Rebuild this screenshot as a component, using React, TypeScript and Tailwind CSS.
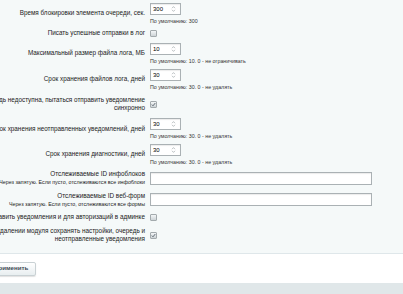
import React from "react";

const FONT = "font-['Liberation_Sans',Arial,sans-serif]";

function Row({
  h,
  label,
  children,
}: {
  h: string;
  label: React.ReactNode;
  children: React.ReactNode;
}) {
  return (
    <div className={`flex items-center ${h}`}>
      <div className="w-[145px] shrink-0 flex justify-end">
        <div className="whitespace-nowrap text-right text-[6.35px] leading-[8px] text-[#222]">
          {label}
        </div>
      </div>
      <div className="ml-[5px] flex flex-col">{children}</div>
    </div>
  );
}

function NumInput({ value }: { value: string }) {
  return (
    <div className="flex items-center justify-between w-[31px] h-[12px] bg-white border border-[#aab1b4] shadow-[inset_0_1px_1px_rgba(0,0,0,0.08)] pl-[2px] pr-[4px]">
      <span className="text-[6px] leading-none text-black">{value}</span>
      <svg width="5" height="8" viewBox="0 0 5 8">
        <path
          d="M1 3.2 L2.5 1.6 L4 3.2 M1 4.8 L2.5 6.4 L4 4.8"
          stroke="#a0a8ab"
          strokeWidth="0.7"
          fill="none"
        />
      </svg>
    </div>
  );
}

function Hint({ children }: { children: React.ReactNode }) {
  return (
    <div className="mt-[3px] whitespace-nowrap text-[5.3px] leading-[6px] text-[#333]">
      {children}
    </div>
  );
}

function Check({ checked }: { checked?: boolean }) {
  return (
    <div className="w-[7px] h-[7px] rounded-[1px] border border-[#a3aaad] bg-linear-to-b from-[#f3f6f7] to-[#cdd4d7] flex items-center justify-center">
      {checked ? (
        <svg width="5" height="5" viewBox="0 0 5 5">
          <path d="M0.8 2.6 L2 3.8 L4.3 1" stroke="#55606a" strokeWidth="0.9" fill="none" />
        </svg>
      ) : null}
    </div>
  );
}

function TextInput() {
  return (
    <div className="w-[222px] h-[13px] bg-white border border-[#aab1b4] shadow-[inset_0_1px_1px_rgba(0,0,0,0.08)]" />
  );
}

export default function App() {
  return (
    <div className={`w-[403px] h-[294px] overflow-hidden flex flex-col ${FONT}`}>
      <div className="bg-[#f5f9f9] border-b border-[#dfe7ea] pb-[7px]">
        <Row h="h-[26px]" label="Время блокировки элемента очереди, сек.">
          <NumInput value="300" />
          <Hint>По умолчанию: 300</Hint>
        </Row>
        <Row h="h-[14px]" label="Писать успешные отправки в лог">
          <Check />
        </Row>
        <Row h="h-[26px]" label="Максимальный размер файла лога, МБ">
          <NumInput value="10" />
          <Hint>По умолчанию: 10. 0 - не ограничивать</Hint>
        </Row>
        <Row h="h-[26px]" label="Срок хранения файлов лога, дней">
          <NumInput value="30" />
          <Hint>По умолчанию: 30. 0 - не удалять</Hint>
        </Row>
        <Row
          h="h-[24px]"
          label={
            <>
              Если очередь недоступна, пытаться отправить уведомление
              <br />
              синхронно
            </>
          }
        >
          <Check checked />
        </Row>
        <Row h="h-[25px]" label="Срок хранения неотправленных уведомлений, дней">
          <NumInput value="30" />
          <Hint>По умолчанию: 30. 0 - не удалять</Hint>
        </Row>
        <Row h="h-[26px]" label="Срок хранения диагностики, дней">
          <NumInput value="30" />
          <Hint>По умолчанию: 30. 0 - не удалять</Hint>
        </Row>
        <Row
          h="h-[22px]"
          label={
            <>
              Отслеживаемые ID инфоблоков
              <br />
              <span className="text-[5.3px]">
                Через запятую. Если пусто, отслеживаются все инфоблоки
              </span>
            </>
          }
        >
          <TextInput />
        </Row>
        <Row
          h="h-[21px]"
          label={
            <>
              Отслеживаемые ID веб-форм
              <br />
              <span className="text-[5.3px]">
                Через запятую. Если пусто, отслеживаются все формы
              </span>
            </>
          }
        >
          <TextInput />
        </Row>
        <Row h="h-[14px]" label="Отправить уведомления и для авторизаций в админке">
          <Check />
        </Row>
        <Row
          h="h-[22px]"
          label={
            <>
              При удалении модуля сохранять настройки, очередь и
              <br />
              неотправленные уведомления
            </>
          }
        >
          <Check checked />
        </Row>
      </div>
      <div className="bg-white h-[29px] flex items-center">
        <button className="ml-[-14px] h-[14px] px-[7px] rounded-[2px] border border-[#c9d1d4] bg-linear-to-b from-white to-[#e8eef0] shadow-[0_1px_1px_rgba(0,0,0,0.12)] text-[6.2px] font-bold text-[#3f4b54] leading-none">
          Применить
        </button>
      </div>
      <div className="flex-1 bg-[#e0e7e9]" />
    </div>
  );
}
